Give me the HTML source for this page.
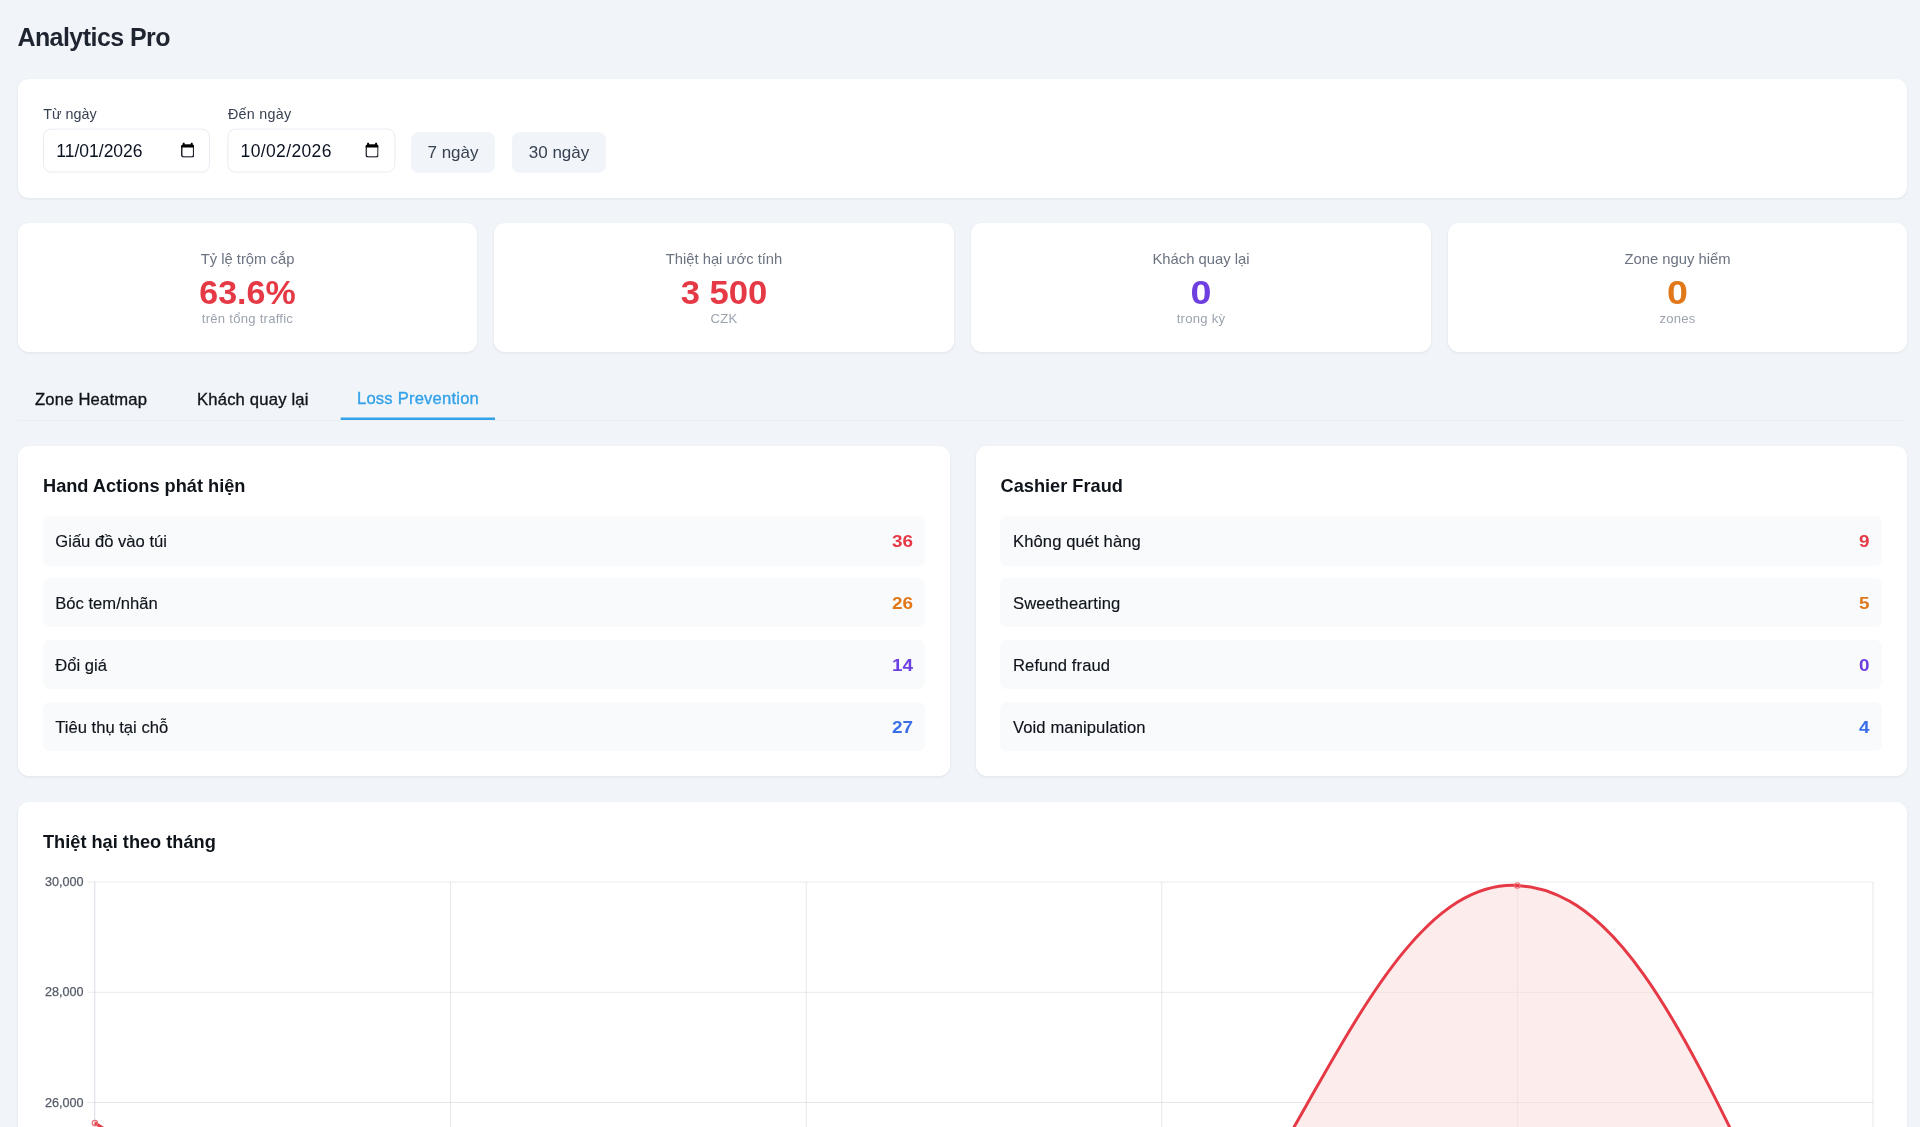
<!DOCTYPE html>
<html lang="vi">
<head>
<meta charset="utf-8">
<title>Analytics Pro</title>
<style>
*{box-sizing:border-box;margin:0;padding:0}
html,body{width:1920px;height:1127px;overflow:hidden;background:#f1f5f9;}
body{font-family:"Liberation Sans",sans-serif;color:#0f172a;position:relative;}
.abs{position:absolute}
.card{position:absolute;background:#fff;border-radius:11px;box-shadow:0 1px 3px rgba(15,23,42,.08);}
h1{position:absolute;left:17.4px;top:22px;font-size:25px;line-height:30px;font-weight:700;color:#1e2430;letter-spacing:-0.55px;white-space:nowrap}
/* filter */
.lbl{position:absolute;font-size:14.3px;line-height:18px;color:#374151;white-space:nowrap}
.inp{position:absolute;top:129px;width:167px;height:44px;transform:translateY(-0.4px);border:1px solid #e6ebf1;border-radius:8px;background:#fff}
.inp span{position:absolute;left:12.2px;top:-0.2px;line-height:42px;font-size:17.5px;color:#0b1220;white-space:nowrap}
.inp svg{position:absolute;left:136.6px;top:13px}
.btn{position:absolute;top:132px;height:41px;border-radius:8px;background:#f1f5f9;color:#374151;font-size:17px;line-height:41px;text-align:center;white-space:nowrap}
/* stats */
.stat{top:223px;width:459px;height:129px;text-align:center}
.stat .t{position:absolute;left:0;right:0;top:250px;}
.stat .a{position:absolute;left:0;right:0;top:27px;font-size:14.8px;line-height:18px;color:#6b7280}
.stat .b{position:absolute;left:0;right:0;top:50px;font-size:33px;line-height:38px;font-weight:700}
.stat .c{position:absolute;left:0;right:0;top:88px;font-size:13.1px;line-height:16px;color:#9ca3af;letter-spacing:0.25px}
/* tabs */
.tab{position:absolute;top:387px;transform:translateY(0.5px);font-size:16.6px;line-height:24px;color:#10141b;white-space:nowrap;letter-spacing:0.2px;-webkit-text-stroke:0.35px currentColor}
.tabline{position:absolute;left:18px;width:1889px;top:420px;height:1px;background:#eaeff4}
/* panels */
.ph{position:absolute;left:25px;font-size:18.2px;line-height:24px;font-weight:700;color:#0f141b;white-space:nowrap}
.row{position:absolute;left:25px;right:25px;height:49px;border-radius:7px;background:#f8fafc}
.row span{position:absolute;left:12.3px;top:1px;line-height:49px;font-size:16.6px;color:#0f141b;white-space:nowrap;-webkit-text-stroke:0.15px currentColor}
.row b{position:absolute;right:11.8px;top:1px;line-height:49px;font-size:17.2px;font-weight:700;transform:scaleX(1.1);transform-origin:100% 50%}
.rp .row{left:24px}.rp .row b{right:12.5px}.rp .row span{left:13px;letter-spacing:0.1px}.rp .ph{left:24.6px}
.red{color:#e63946}.org{color:#e0781a}.pur{color:#6d3fe0}.blu{color:#3b6fe8}
</style>
</head>
<body><div id="wrap" style="position:absolute;left:0;top:0;width:1920px;height:1127px;will-change:transform">
<h1>Analytics Pro</h1>

<div class="card" style="left:18px;top:79px;width:1889px;height:119px"></div>
<div class="lbl" style="left:43.3px;top:104.6px">Từ ngày</div>
<div class="lbl" style="left:227.9px;top:104.6px;letter-spacing:0.3px">Đến ngày</div>
<div class="inp" style="left:43.1px"><span>11/01/2026</span>
<svg width="13.4" height="15.2" viewBox="0 0 13.4 15.2"><rect x="0.75" y="2.65" width="11.9" height="11.75" rx="1.9" fill="none" stroke="#22262e" stroke-width="1.5"/><path d="M0 5V4.4Q0 1.9 2.5 1.9H10.9Q13.4 1.9 13.4 4.4V5Z" fill="#000"/><rect x="1.75" y="0" width="1.9" height="3" rx="0.5" fill="#000"/><rect x="9.75" y="0" width="1.9" height="3" rx="0.5" fill="#000"/></svg></div>
<div class="inp" style="left:227px;width:168px;transform:translate(0.4px,-0.4px)"><span style="letter-spacing:0.36px">10/02/2026</span>
<svg width="13.4" height="15.2" viewBox="0 0 13.4 15.2"><rect x="0.75" y="2.65" width="11.9" height="11.75" rx="1.9" fill="none" stroke="#22262e" stroke-width="1.5"/><path d="M0 5V4.4Q0 1.9 2.5 1.9H10.9Q13.4 1.9 13.4 4.4V5Z" fill="#000"/><rect x="1.75" y="0" width="1.9" height="3" rx="0.5" fill="#000"/><rect x="9.75" y="0" width="1.9" height="3" rx="0.5" fill="#000"/></svg></div>
<div class="btn" style="left:411px;width:84px">7 ngày</div>
<div class="btn" style="left:512px;width:94px">30 ngày</div>

<div class="card stat" style="left:18px"><div class="a">Tỷ lệ trộm cắp</div><div class="b red" style="transform:translateY(0.6px) scaleX(1.03)">63.6%</div><div class="c">trên tổng traffic</div></div>
<div class="card stat" style="left:494px;width:460px"><div class="a">Thiệt hại ước tính</div><div class="b red" style="transform:translateY(0.6px) scaleX(1.05)">3 500</div><div class="c">CZK</div></div>
<div class="card stat" style="left:971px;width:460px"><div class="a">Khách quay lại</div><div class="b pur" style="transform:translateY(0.6px) scaleX(1.14)">0</div><div class="c">trong kỳ</div></div>
<div class="card stat" style="left:1448px"><div class="a">Zone nguy hiểm</div><div class="b org" style="transform:translateY(0.6px) scaleX(1.14)">0</div><div class="c">zones</div></div>

<div class="tabline"></div>
<div class="tab" style="left:35px">Zone Heatmap</div>
<div class="tab" style="left:197px">Khách quay lại</div>
<div class="tab" style="left:357px;top:386px;color:#33a1e8">Loss Prevention</div>


<div class="card" style="left:18px;top:446px;width:932px;height:330px">
<div class="ph" style="top:27.7px">Hand Actions phát hiện</div>
<div class="row" style="top:70px;height:50px"><span>Giấu đồ vào túi</span><b class="red">36</b></div>
<div class="row" style="top:132px"><span>Bóc tem/nhãn</span><b class="org">26</b></div>
<div class="row" style="top:194px"><span>Đổi giá</span><b class="pur">14</b></div>
<div class="row" style="top:256px"><span>Tiêu thụ tại chỗ</span><b class="blu">27</b></div>
</div>

<div class="card rp" style="left:976px;top:446px;width:931px;height:330px;">
<div class="ph" style="top:27.7px">Cashier Fraud</div>
<div class="row" style="top:70px;height:50px"><span>Không quét hàng</span><b class="red">9</b></div>
<div class="row" style="top:132px"><span>Sweethearting</span><b class="org">5</b></div>
<div class="row" style="top:194px"><span>Refund fraud</span><b class="pur">0</b></div>
<div class="row" style="top:256px"><span>Void manipulation</span><b class="blu">4</b></div>
</div>

<div class="card" style="left:18px;top:802px;width:1889px;height:400px;border-radius:11px 11px 0 0">
<div class="ph" style="top:27.7px">Thiệt hại theo tháng</div>
</div>
<svg class="abs" style="left:0;top:0" width="1920" height="1127" viewBox="0 0 1920 1127">
<rect x="340.7" y="417.5" width="154.3" height="2.5" fill="#33a1e8"/>
<g stroke="rgba(0,0,0,0.052)" stroke-width="1.1" fill="none">
<path d="M87 882H1873M87 992.25H1873M87 1102.5H1873"/>
<path d="M450.6 882V1127M806.2 882V1127M1161.8 882V1127M1517.4 882V1127M1873 882V1127"/>
</g>
<path d="M94.7 882V1127" stroke="#dfe3ea" stroke-width="1.2" fill="none"/>
<path d="M94.9 1123.1C237.2 1212.7 308 1270 450.6 1347L806.2 2003L1161.8 1316.27C1298.41 1187.33 1376.45 878.87 1517.3 885.4C1658.99 891.97 1730.66 1168.99 1873 1403.95V2100H95Z" fill="#fdecec"/>
<g stroke="rgba(0,0,0,0.042)" stroke-width="1.1" fill="none">
<path d="M87 882H1873M87 992.25H1873M87 1102.5H1873"/>
<path d="M450.6 882V1127M806.2 882V1127M1161.8 882V1127M1517.4 882V1127M1873 882V1127"/>
</g>
<path d="M94.9 1123.1C237.2 1212.7 308 1270 450.6 1347M1161.8 1316.27C1298.41 1187.33 1376.45 878.87 1517.3 885.4C1658.99 891.97 1730.66 1168.99 1873 1403.95" fill="none" stroke="#e63946" stroke-width="3" stroke-linecap="butt"/>
<circle cx="94.9" cy="1123.1" r="2.7" fill="rgba(239,68,68,0.1)" stroke="#ef6b72" stroke-width="1.1"/>
<circle cx="1517.3" cy="885.4" r="2.7" fill="rgba(239,68,68,0.1)" stroke="#ef6b72" stroke-width="1.1"/>
<g font-family="Liberation Sans, sans-serif" font-size="12.6" fill="#555c68" stroke="#555c68" stroke-width="0.25" text-anchor="end">
<text x="83.5" y="886">30,000</text>
<text x="83.5" y="996.3">28,000</text>
<text x="83.5" y="1106.5">26,000</text>
</g>
</svg>
</div></body>
</html>
